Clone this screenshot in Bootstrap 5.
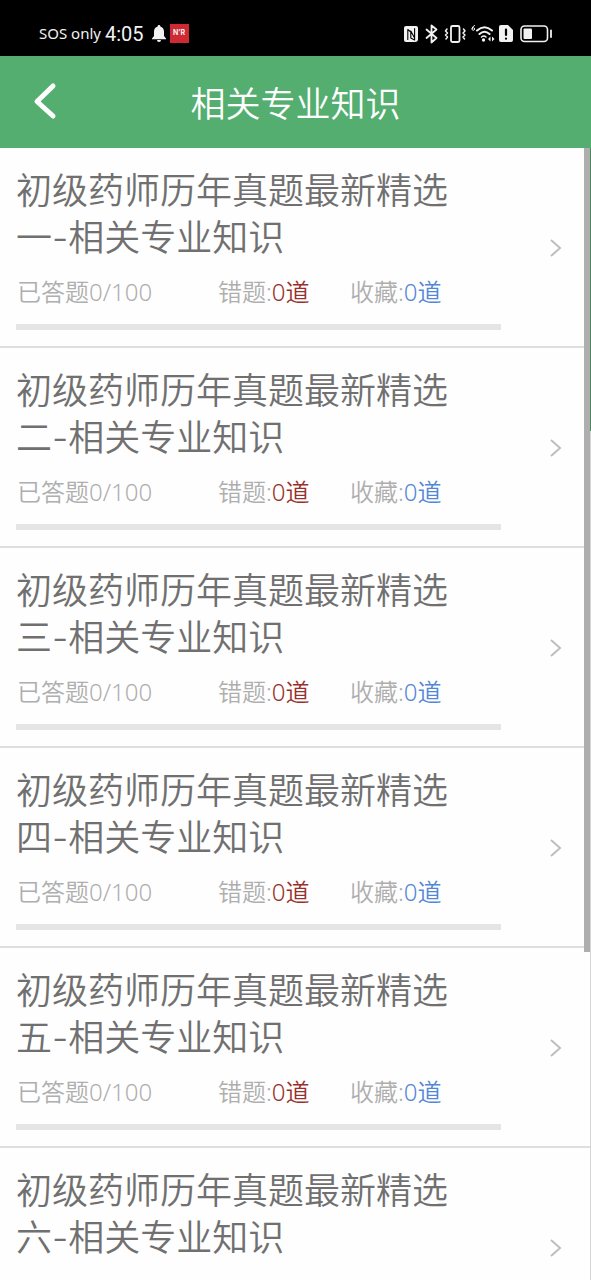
<!DOCTYPE html>
<html lang="zh-CN">
<head>
<meta charset="utf-8">
<meta name="viewport" content="width=device-width, initial-scale=1">
<title>相关专业知识</title>
<link href="https://cdn.jsdelivr.net/npm/bootstrap@5.3.0/dist/css/bootstrap.min.css" rel="stylesheet">
<style>
  body { font-family: Inter, "Noto Sans CJK SC", sans-serif; font-weight: 350; color: #707070; background: #fefefe; }
  .status-bar { height: 56px; padding: 11px 38px 0 39px; background: #000; color: #f2f2f2; font-weight: 400; }
  .status-bar svg { display: block; }
  .carrier { font-family: "Noto Sans", sans-serif; font-size: 15px; }
  .clock { font-family: Roboto, sans-serif; font-size: 20px; }
  .app-tag { width: 19px; height: 19px; background: #cf2a33; font-size: 7px; font-weight: 700; }
  .title-bar { height: 92px; background: #53ae70; color: #fff; }
  .title-bar h1 { font-size: 35px; font-weight: 350; line-height: 47px; }
  .back-btn { left: 24px; top: 22px; padding: 0 8px; }
  .paper { padding: 20px 28px 16px 16px; border-bottom: 2px solid #dedede; color: inherit; text-decoration: none; }
  .paper-main { flex: 0 1 485px; }
  .paper-title { width: 432px; font-size: 36px; font-weight: 350; line-height: 47px; }
  .stats { grid-template-columns: 201px 132px auto; margin: 13px 0 15px; padding-left: 1px; font-family: "Noto Sans", "Noto Sans CJK SC", sans-serif; font-size: 24px; line-height: 34px; color: #aeaeae; white-space: nowrap; }
  .wrong { color: #98302c; }
  .saved { color: #5287d6; }
  .paper .progress { height: 6px; border-radius: 0; background: #e5e5e5; }
  .scroll-thumb { width: 7px; height: 71%; background: #aeaeae; }
  .edge { width: 1px; background: #d5d5d5; }
  .edge-top { height: 25%; background: #4b8660; }
</style>
</head>
<body>
<div class="vh-100 d-flex flex-column overflow-hidden">
  <div class="status-bar d-flex justify-content-between align-items-center flex-shrink-0">
    <div class="d-flex align-items-center">
      <span class="carrier me-1">SOS only</span>
      <span class="clock me-2">4:05</span>
      <svg class="me-1" width="14" height="17" viewBox="0 0 14 17" fill="#f2f2f2"><path d="M7 0a1.300 1.300 0 0 1 1.300 1.500C10.600 2 12 4 12 6.500V11l2 2.500v.700H0v-.700L2 11V6.500C2 4 3.400 2 5.700 1.500A1.300 1.300 0 0 1 7 0zM5 15h4a2 2 0 0 1-4 0z"/></svg>
      <span class="app-tag d-flex align-items-center justify-content-center">N&#8217;R</span>
    </div>
    <svg width="150" height="20" viewBox="403 24 150 20" fill="none" stroke="#f2f2f2" stroke-width="1.800" stroke-linejoin="round" stroke-linecap="round">
      <path d="M406 26h10a2 2 0 0 1 2 2v11a3 3 0 0 1-3 3h-9a2 2 0 0 1-2-2V28a2 2 0 0 1 2-2z" fill="#f2f2f2" stroke="none"/>
      <path d="M407.800 39.500V29.500l3 2.500v6l3.800 2V28.500M410.800 31l3.800 7" stroke="#000" stroke-width="1.100"/>
      <path d="M426.500 29.500l10 8.500-5 4.500V25.500l5 4-10 8.500"/>
      <rect x="451" y="26" width="8.500" height="16" rx="1.500"/>
      <path d="M447 29l-1.500 2 2 2-2 2 2 2-1.500 2M463.500 29l1.500 2-2 2 2 2-2 2 1.500 2" stroke-width="1.500"/>
      <path d="M474.500 25.500q-2.500 1-2.500 3.500a1.300 1.300 0 1 0 1.300-1.300q-1 0-1.300 1" stroke-width="1"/>
      <path d="M477 30.500q7.500-6.500 15 0M479.500 34q5-4.500 10 0" stroke-width="2"/>
      <path d="M481.500 37q2.500-2 4.500 0" stroke-width="1.500"/>
      <circle cx="483.500" cy="40" r="1.700" fill="#f2f2f2" stroke="none"/>
      <path d="M490.500 36.500l-2.500 2.500 2.500 2.500zM492 36.500l2.500 2.500-2.500 2.500z" fill="#f2f2f2" stroke="none"/>
      <path d="M501 25h7l5 5v10a2 2 0 0 1-2 2h-10a2 2 0 0 1-2-2V27a2 2 0 0 1 2-2z" fill="#f2f2f2" stroke="none"/>
      <path d="M506 29.500v5.500M506 38.500v.2" stroke="#000" stroke-width="2.200"/>
      <rect x="521" y="26" width="26.500" height="15.500" rx="3.500" stroke-width="1.600"/>
      <rect x="523.500" y="28.500" width="8.500" height="10.500" rx="1" fill="#f2f2f2" stroke="none"/>
      <path d="M551 30.500v6.500"/>
    </svg>
  </div>

  <header class="title-bar position-relative d-flex align-items-center justify-content-center flex-shrink-0">
    <button type="button" class="back-btn btn border-0 position-absolute" aria-label="返回">
      <svg class="d-block" width="26" height="46" viewBox="0 0 26 46" fill="none" stroke="#fff" stroke-width="5" stroke-linecap="round" stroke-linejoin="round"><path d="M21 8L5 23.500 21 38"/></svg>
    </button>
    <h1 class="m-0 pt-1">相关专业知识</h1>
  </header>

  <main class="position-relative flex-fill overflow-hidden">
    <div id="papers"></div>
    <div class="scroll-thumb position-absolute top-0 end-0"></div>
    <div class="edge position-absolute top-0 end-0 h-100"><div class="edge-top"></div></div>
  </main>
</div>

<template id="paper-row">
  <a href="#" class="paper d-flex align-items-center justify-content-between">
    <div class="paper-main">
      <h2 class="paper-title m-0"></h2>
      <div class="stats d-grid">
        <span>已答题0/100</span>
        <span>错题:<span class="wrong">0道</span></span>
        <span>收藏:<span class="saved">0道</span></span>
      </div>
      <div class="progress" role="progressbar" aria-label="答题进度" aria-valuenow="0" aria-valuemin="0" aria-valuemax="100"><div class="progress-bar w-0"></div></div>
    </div>
    <svg width="14" height="20" viewBox="0 0 14 20" fill="none" stroke="#bebebe" stroke-width="2"><path d="M2 1l9 8-9 8"/></svg>
  </a>
</template>
<script>
  const row = document.getElementById('paper-row');
  for (const n of '一二三四五六') {
    const item = row.content.cloneNode(true);
    item.querySelector('.paper-title').textContent = `初级药师历年真题最新精选${n}-相关专业知识`;
    document.getElementById('papers').append(item);
  }
</script>
<script src="https://cdn.jsdelivr.net/npm/bootstrap@5.3.0/dist/js/bootstrap.bundle.min.js"></script>
</body>
</html>
